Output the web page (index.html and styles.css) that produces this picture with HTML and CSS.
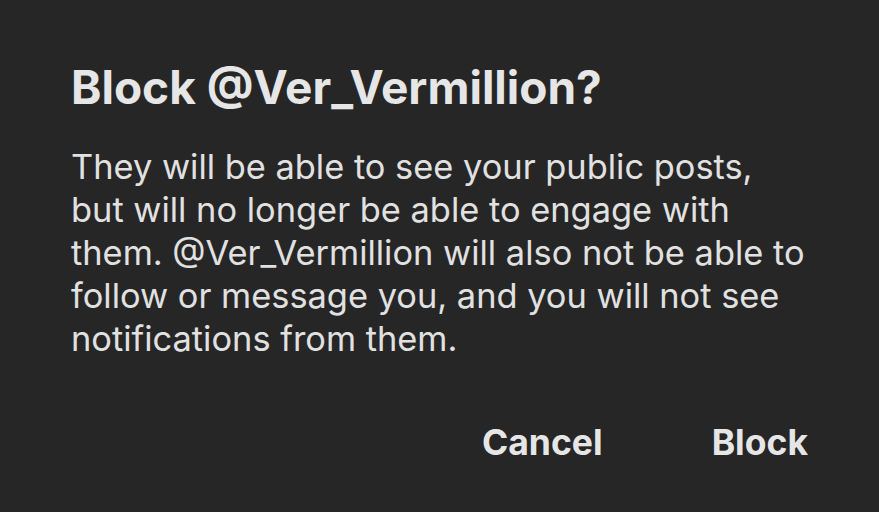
FILE: index.html
```html
<!DOCTYPE html>
<html>
<head>
  <title>Block @Ver_Vermillion?</title>
  <link rel="stylesheet" href="styles.css">
</head>
<body>
  <div class="dialog">
    <h1 class="dialog-title">Block @Ver_Vermillion?</h1>
    <p class="dialog-text">They will be able to see your public posts, but will no longer be able to engage with them. @Ver_Vermillion will also not be able to follow or message you, and you will not see notifications from them.</p>
    <div class="dialog-actions">
      <button class="action-btn">Cancel</button>
      <button class="action-btn">Block</button>
    </div>
  </div>
</body>
</html>
```

FILE: styles.css
```css
html, body {
  margin: 0;
  height: 100%;
  background-color: #262626;
}

body {
  font-family: Inter, "Noto Sans", sans-serif;
  color: #e1e1e1;
}

.dialog {
  padding: 59px 71px 0 71px;
}

.dialog-title {
  margin: 0;
  font-size: 46px;
  font-weight: 700;
  line-height: 56px;
  color: #e6e6e6;
}

.dialog-text {
  margin: 30px 0 0 0;
  font-size: 34.4px;
  line-height: 43px;
  max-width: 736px;
}

.dialog-actions {
  display: flex;
  justify-content: flex-end;
  gap: 109px;
  margin-top: 61px;
}

.action-btn {
  background: none;
  border: none;
  padding: 0;
  font-family: inherit;
  font-size: 35.5px;
  font-weight: 700;
  color: #e6e6e6;
  cursor: pointer;
}
```
